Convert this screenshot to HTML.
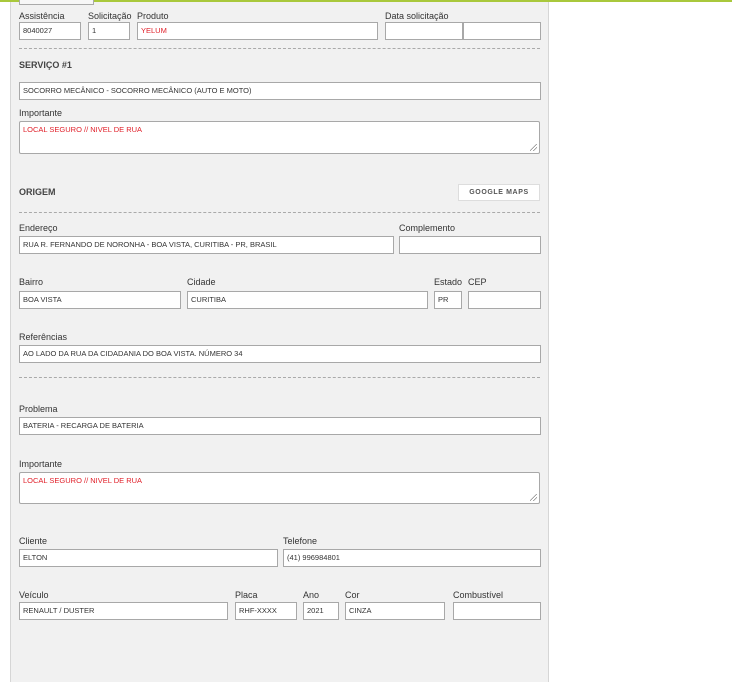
<!DOCTYPE html>
<html><head><meta charset="utf-8"><style>
body{margin:0;width:732px;height:672px;background:#fff;position:relative;overflow:hidden;font-family:"Liberation Sans",Tahoma,sans-serif;}
.top{position:absolute;left:0;top:0;width:732px;height:2px;background:#a9c83c;}
.panel{position:absolute;left:10px;top:2px;width:537px;height:680px;background:#f1f1f1;border-left:1px solid #d6d6d6;border-right:1px solid #d6d6d6;}
.stub{position:absolute;left:19px;top:0;width:73px;height:4px;border:1px solid #aaa;border-top:none;background:#f7f7f7;}
.l{position:absolute;font-size:9px;color:#333;white-space:nowrap;}
.i{position:absolute;height:18px;background:#fff;border:1px solid #a8a8a8;font-size:7.5px;color:#333;line-height:16px;padding-left:3px;box-sizing:border-box;white-space:nowrap;overflow:hidden;}
.ta{position:absolute;background:#fff;border:1px solid #a8a8a8;border-radius:2px;font-size:7.5px;color:#e0202a;padding:3px 3px;box-sizing:border-box;}
.red{color:#e0202a;}
.h{position:absolute;font-size:9px;font-weight:bold;color:#444;}
.d{position:absolute;left:19px;width:521px;border-top:1px dashed #aaa;height:0;}
.btn{position:absolute;left:458px;top:184px;width:82px;height:17px;background:#fff;border:1px solid #ddd;box-sizing:border-box;font-size:7px;font-weight:bold;color:#555;letter-spacing:.6px;text-align:center;line-height:15px;}
.grip{position:absolute;right:2px;bottom:2px;width:7px;height:7px;background:linear-gradient(135deg,transparent 45%,#888 45%,#888 52%,transparent 52%,transparent 70%,#888 70%,#888 77%,transparent 77%);}
</style></head><body>
<div class="top"></div>
<div class="panel"></div>
<div class="stub"></div>

<div class="l" style="left:19px;top:11px">Assistência</div>
<div class="l" style="left:88px;top:11px">Solicitação</div>
<div class="l" style="left:137px;top:11px">Produto</div>
<div class="l" style="left:385px;top:11px">Data solicitação</div>
<div class="i" style="left:19px;top:22px;width:62px">8040027</div>
<div class="i" style="left:88px;top:22px;width:42px">1</div>
<div class="i red" style="left:137px;top:22px;width:241px">YELUM</div>
<div class="i" style="left:385px;top:22px;width:78px"></div>
<div class="i" style="left:463px;top:22px;width:78px"></div>
<div class="d" style="top:48px"></div>

<div class="h" style="left:19px;top:60px">SERVIÇO #1</div>
<div class="i" style="left:19px;top:82px;width:522px">SOCORRO MECÂNICO - SOCORRO MECÂNICO (AUTO E MOTO)</div>
<div class="l" style="left:19px;top:108px">Importante</div>
<div class="ta" style="left:19px;top:121px;width:521px;height:33px">LOCAL SEGURO // NIVEL DE RUA<div class="grip"></div></div>

<div class="h" style="left:19px;top:187px">ORIGEM</div>
<div class="btn">GOOGLE MAPS</div>
<div class="d" style="top:212px"></div>

<div class="l" style="left:19px;top:223px">Endereço</div>
<div class="l" style="left:399px;top:223px">Complemento</div>
<div class="i" style="left:19px;top:236px;width:375px">RUA R. FERNANDO DE NORONHA - BOA VISTA, CURITIBA - PR, BRASIL</div>
<div class="i" style="left:399px;top:236px;width:142px"></div>

<div class="l" style="left:19px;top:277px">Bairro</div>
<div class="l" style="left:187px;top:277px">Cidade</div>
<div class="l" style="left:434px;top:277px">Estado</div>
<div class="l" style="left:468px;top:277px">CEP</div>
<div class="i" style="left:19px;top:291px;width:162px">BOA VISTA</div>
<div class="i" style="left:187px;top:291px;width:241px">CURITIBA</div>
<div class="i" style="left:434px;top:291px;width:28px">PR</div>
<div class="i" style="left:468px;top:291px;width:73px"></div>

<div class="l" style="left:19px;top:332px">Referências</div>
<div class="i" style="left:19px;top:345px;width:522px">AO LADO DA RUA DA CIDADANIA DO BOA VISTA. NÚMERO 34</div>
<div class="d" style="top:377px"></div>

<div class="l" style="left:19px;top:404px">Problema</div>
<div class="i" style="left:19px;top:417px;width:522px">BATERIA - RECARGA DE BATERIA</div>
<div class="l" style="left:19px;top:459px">Importante</div>
<div class="ta" style="left:19px;top:472px;width:521px;height:32px">LOCAL SEGURO // NIVEL DE RUA<div class="grip"></div></div>

<div class="l" style="left:19px;top:536px">Cliente</div>
<div class="l" style="left:283px;top:536px">Telefone</div>
<div class="i" style="left:19px;top:549px;width:259px">ELTON</div>
<div class="i" style="left:283px;top:549px;width:258px">(41) 996984801</div>

<div class="l" style="left:19px;top:590px">Veículo</div>
<div class="l" style="left:235px;top:590px">Placa</div>
<div class="l" style="left:303px;top:590px">Ano</div>
<div class="l" style="left:345px;top:590px">Cor</div>
<div class="l" style="left:453px;top:590px">Combustível</div>
<div class="i" style="left:19px;top:602px;width:209px">RENAULT / DUSTER</div>
<div class="i" style="left:235px;top:602px;width:62px">RHF-XXXX</div>
<div class="i" style="left:303px;top:602px;width:36px">2021</div>
<div class="i" style="left:345px;top:602px;width:100px">CINZA</div>
<div class="i" style="left:453px;top:602px;width:88px"></div>
</body></html>
